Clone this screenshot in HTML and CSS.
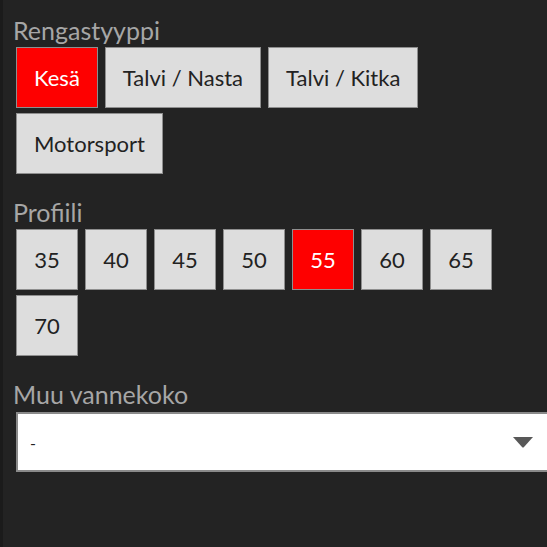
FILE: index.html
```html
<!DOCTYPE html>
<html lang="fi">
<head>
    <meta charset="UTF-8">
    <meta name="viewport" content="width=device-width, initial-scale=1.0">
    <title>Rengashaku</title>
    <link rel="stylesheet" href="styles.css">
</head>
<body>
    <main class="filters">
        <!-- Rengastyyppi -->
        <section class="filter-group">
            <h3 class="filter-label">Rengastyyppi</h3>
            <div class="options">
                <button class="option active">Kesä</button>
                <button class="option">Talvi / Nasta</button>
                <button class="option">Talvi / Kitka</button>
                <button class="option">Motorsport</button>
            </div>
        </section>

        <!-- Profiili -->
        <section class="filter-group">
            <h3 class="filter-label">Profiili</h3>
            <div class="options">
                <button class="option num">35</button>
                <button class="option num">40</button>
                <button class="option num">45</button>
                <button class="option num">50</button>
                <button class="option num active">55</button>
                <button class="option num">60</button>
                <button class="option num">65</button>
                <button class="option num">70</button>
            </div>
        </section>

        <!-- Vannekoko -->
        <section class="filter-group">
            <h3 class="filter-label">Muu vannekoko</h3>
            <div class="select-box">
                <span class="select-value">-</span>
                <svg class="select-arrow" width="22" height="12" viewBox="0 0 22 12">
                    <path d="M1 1 L21 1 L12 11 Q11 12 10 11 Z" fill="#585858"/>
                </svg>
            </div>
        </section>
    </main>
</body>
</html>
```

FILE: styles.css
```css
html, body {
    margin: 0;
    padding: 0;
    height: 100%;
}
body {
    background: #232323;
    border-left: 3px solid #1b1b1b;
    overflow: hidden;
    font-family: "Lato", "Open Sans", sans-serif;
}
.filters {
    padding: 16px 0 0 10px;
}
.filter-group {
    margin-bottom: 24px;
}
.filter-label {
    margin: 0 0 3px 0;
    height: 28px;
    line-height: 28px;
    font-size: 25px;
    font-weight: normal;
    color: #a6a6a6;
}
.options {
    display: flex;
    flex-wrap: wrap;
    gap: 5px 7px;
    padding-left: 3px;
    padding-right: 40px;
}
.option {
    height: 61px;
    padding: 0 17px;
    border: 1px solid #8e8e8e;
    background: #dddddd;
    color: #222;
    font-family: inherit;
    font-size: 22px;
    cursor: pointer;
}
.option.num {
    width: 62px;
    padding: 0;
}
.option.active {
    background: #fe0000;
    color: #fff;
}
.select-box {
    display: flex;
    align-items: center;
    justify-content: space-between;
    box-sizing: border-box;
    width: 542px;
    height: 60px;
    margin: 4px 0 0 3px;
    padding: 0 22px 0 12px;
    background: #fff;
    border: 2px solid #8a8a8a;
    color: #222;
    font-size: 16px;
}
```
